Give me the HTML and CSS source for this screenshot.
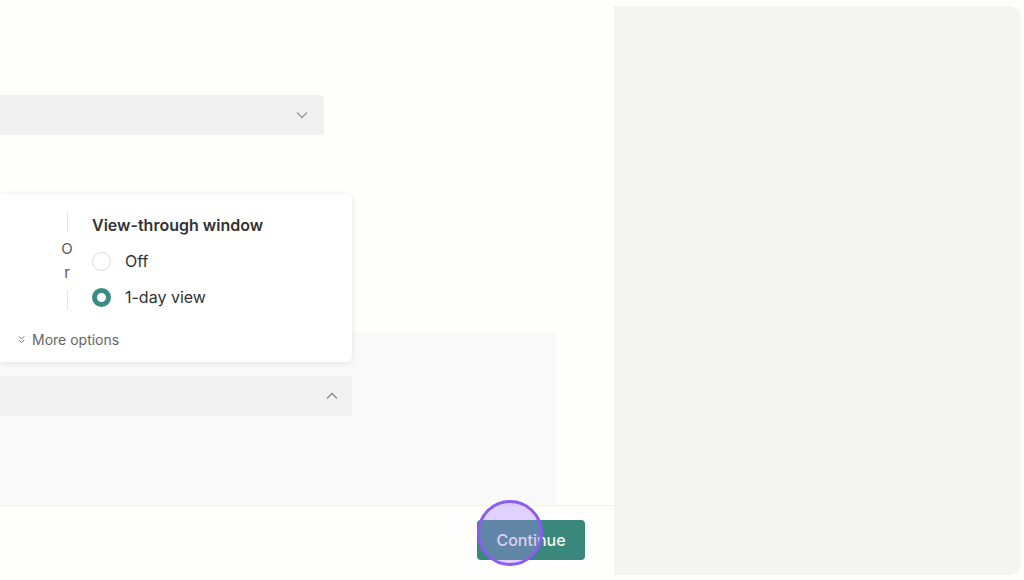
FILE: index.html
```html
<!DOCTYPE html>
<html lang="en">

<head>
    <meta charset="UTF-8">
    <meta name="viewport" content="width=device-width, initial-scale=1.0">
    <title>Attribution setting</title>
    <link rel="stylesheet" href="styles.css">
</head>

<body>
    <div class="page">
        <main class="main">
            <div class="content">
                <!-- attribution select -->
                <div class="select-bar">
                    <svg class="chev" width="14" height="14" viewBox="0 0 14 14"><path d="M2 4.5l5 5 5-5" fill="none" stroke="#9a9a9a" stroke-width="1.3"/></svg>
                </div>

                <!-- lower settings area -->
                <div class="section">
                    <div class="acc-bar">
                        <svg class="chev" width="14" height="14" viewBox="0 0 14 14"><path d="M2 9.5l5-5 5 5" fill="none" stroke="#8a8a8a" stroke-width="1.3"/></svg>
                    </div>
                </div>

                <!-- popover with windows -->
                <div class="popover">
                    <div class="pop-row">
                        <div class="or-col">
                            <span class="or-line"></span>
                            <span class="or-text">O<br>r</span>
                            <span class="or-line"></span>
                        </div>
                        <div class="group">
                            <div class="group-title">View-through window</div>
                            <label class="radio"><span class="dot"></span>Off</label>
                            <label class="radio"><span class="dot on"></span>1-day view</label>
                        </div>
                    </div>
                    <div class="more">
                        <svg width="9" height="9" viewBox="0 0 10 10"><path d="M2 1.5l3 3 3-3M2 5.5l3 3 3-3" fill="none" stroke="#777" stroke-width="1.1"/></svg>
                        More options
                    </div>
                </div>
            </div>

            <footer class="footer">
                <button class="btn">Continue
                    <span class="cursor"></span>
                </button>
            </footer>
        </main>

        <aside class="preview"></aside>
    </div>
</body>

</html>
```

FILE: styles.css
```css
* {
    box-sizing: border-box;
}

body {
    margin: 0;
    background-color: #fefefd;
    font-family: Inter, "Noto Sans", sans-serif;
    color: #333;
}

.page {
    display: flex;
    height: 580px;
}

/* left column */
.main {
    width: 614px;
    display: flex;
    flex-direction: column;
}

.content {
    position: relative;
    flex: 1;
    padding-top: 95px;
}

.select-bar {
    width: 324px;
    height: 40px;
    background-color: #f0f1f0;
    border-radius: 0 4px 4px 0;
    display: flex;
    align-items: center;
    justify-content: flex-end;
    padding-right: 15px;
}

.section {
    margin-top: 197px;
    width: 556px;
    height: 173px;
    background-color: #f9f9f9;
    padding-top: 44px;
}

.acc-bar {
    width: 352px;
    height: 40px;
    background-color: #f1f2f1;
    border-radius: 0 4px 4px 0;
    display: flex;
    align-items: center;
    justify-content: flex-end;
    padding-right: 13px;
}

/* popover */
.popover {
    position: absolute;
    top: 194px;
    left: 0;
    width: 352px;
    height: 168px;
    background-color: #fff;
    border-radius: 0 6px 6px 0;
    box-shadow: 0 1px 6px rgba(0, 0, 0, 0.1);
    padding: 18px 0 0 0;
}

.pop-row {
    display: flex;
}

.or-col {
    padding-left: 60px;
    display: flex;
    flex-direction: column;
    align-items: center;
    width: 74px;
}

.or-line {
    width: 1px;
    height: 20px;
    background-color: #e6e6e6;
}

.or-text {
    font-size: 15px;
    line-height: 24px;
    color: #5a5a5a;
    padding: 5px 0;
    text-align: center;
}

.group {
    padding-left: 18px;
}

.group-title {
    font-size: 16px;
    font-weight: 600;
    color: #333;
    line-height: 26px;
    margin-bottom: 15px;
}

.radio {
    display: flex;
    align-items: center;
    font-size: 16px;
    color: #333;
    height: 36px;
    margin-top: -10px;
    margin-bottom: 10px;
}

.dot {
    width: 19px;
    height: 19px;
    border-radius: 50%;
    border: 1.5px solid #ddd;
    margin-right: 14px;
    background-color: #fff;
}

.dot.on {
    border: 5px solid #3a8d84;
}

.more {
    display: flex;
    align-items: center;
    gap: 6px;
    padding-left: 17px;
    margin-top: 6px;
    font-size: 14px;
    color: #666;
}

/* footer */
.footer {
    height: 75px;
    border-top: 1px solid #f0f0ef;
    display: flex;
    justify-content: flex-end;
    align-items: flex-start;
    padding: 14px 29px 0 0;
}

.btn {
    position: relative;
    width: 108px;
    height: 40px;
    border: none;
    border-radius: 4px;
    background-color: #3a877c;
    color: #f4f7f6;
    font-family: inherit;
    font-size: 16px;
    font-weight: 500;
}

.cursor {
    position: absolute;
    left: 0;
    top: -20px;
    width: 66px;
    height: 66px;
    border-radius: 50%;
    border: 3px solid #8b5cf0;
    background-color: rgba(170, 130, 250, 0.35);
}

/* right preview panel */
.preview {
    flex: 1;
    margin: 6px 3px 5px 0;
    background-color: #f4f4f3;
    border-radius: 0 12px 12px 0;
}
```
